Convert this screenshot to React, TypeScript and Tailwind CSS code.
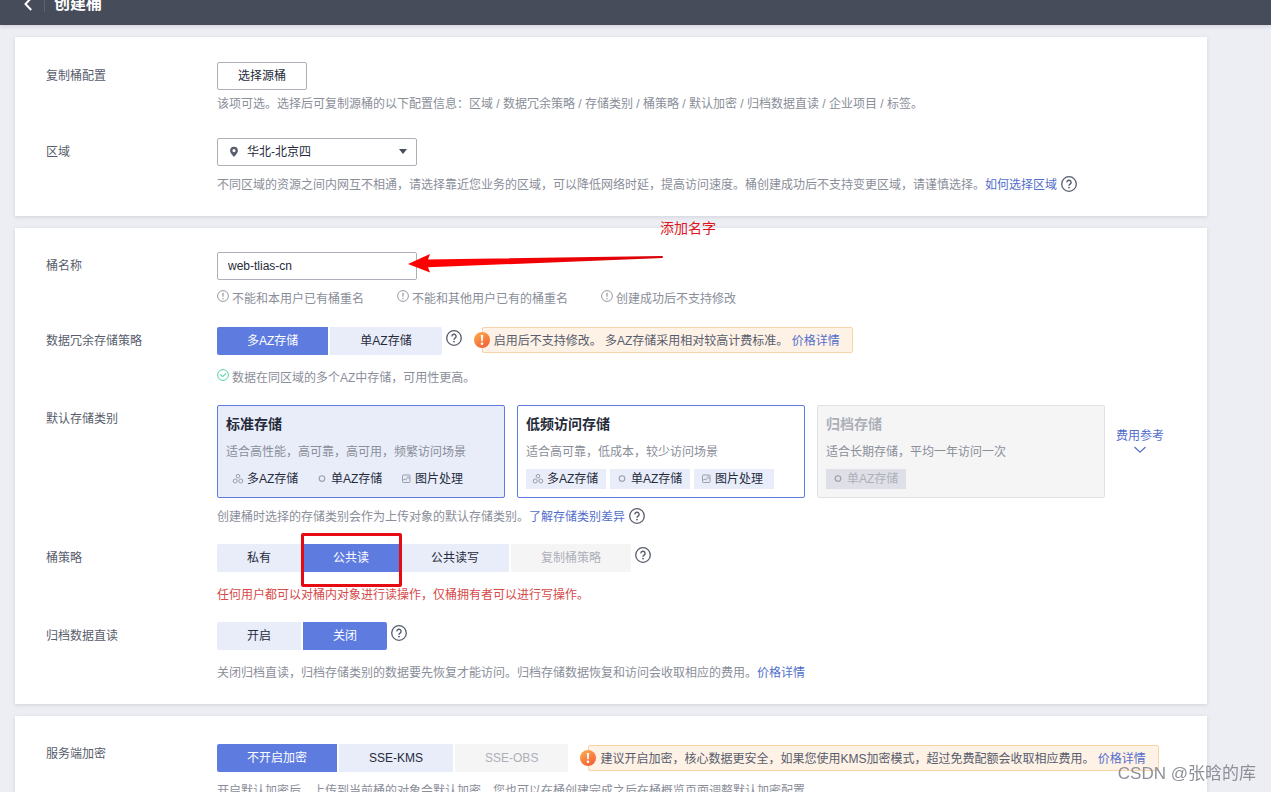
import { useState, type ReactNode } from "react";
import clsx from "clsx";

function HelpIcon({ className }: { className?: string }) {
  return (
    <svg viewBox="0 0 16 16" className={clsx("h-4 w-4 shrink-0", className)} fill="none" stroke="#575d6c">
      <circle cx="8" cy="8" r="7.3" strokeWidth="1.3" />
      <path d="M5.9 6.4a2.1 2.1 0 1 1 3.2 1.7c-.7.5-1.1.8-1.1 1.6" strokeWidth="1.4" />
      <circle cx="8" cy="11.6" r=".9" fill="#575d6c" stroke="none" />
    </svg>
  );
}

function InfoIcon() {
  return (
    <svg viewBox="0 0 12 12" className="mb-1.5 h-3 w-3 shrink-0" fill="none" stroke="#8a8e99">
      <circle cx="6" cy="6" r="5.4" strokeWidth=".9" />
      <path d="M6 2.8v4M6 8v1.2" strokeWidth="1.1" />
    </svg>
  );
}

function OkIcon() {
  return (
    <svg viewBox="0 0 12 12" className="mb-1.5 h-3 w-3 shrink-0" fill="none" stroke="#50d4ab">
      <circle cx="6" cy="6" r="5.4" strokeWidth="1" />
      <path d="M3.2 5.4l2.4 2.2 3.6-3.2" strokeWidth="1.1" />
    </svg>
  );
}

function WarnIcon() {
  return (
    <svg viewBox="0 0 16 16" className="absolute -left-[9px] top-1 h-4 w-4">
      <defs>
        <linearGradient id="warn" x1="0" y1="0" x2="0.6" y2="1">
          <stop offset="0" stopColor="#fdb04c" />
          <stop offset="1" stopColor="#f4643a" />
        </linearGradient>
      </defs>
      <circle cx="8" cy="8" r="8" fill="url(#warn)" />
      <path d="M6.8 3h2.4l-.5 6.3H7.3z" fill="#fff" />
      <circle cx="8" cy="11.7" r="1.3" fill="#fff" />
    </svg>
  );
}

type TagKind = "multi" | "single" | "image";

function TagIcon({ kind }: { kind: TagKind }) {
  return (
    <svg viewBox="0 0 12 12" className="h-3 w-3 shrink-0" fill="none" stroke="#9a9eaa" strokeWidth="1">
      {kind === "multi" && (
        <>
          <circle cx="6" cy="3.2" r="1.8" />
          <circle cx="3.2" cy="8" r="2" />
          <circle cx="8.8" cy="8" r="2" />
        </>
      )}
      {kind === "single" && <circle cx="6" cy="5.5" r="2.8" strokeWidth="1.1" />}
      {kind === "image" && (
        <>
          <rect x="2.5" y="2" width="7.5" height="7.5" rx=".8" />
          <path d="M2.5 7.5L5 6l2 1.2M6.500 5h3.500M7.500 3.500h1" />
        </>
      )}
    </svg>
  );
}

type RowProps = { label: string; htmlFor?: string; compact?: boolean; className?: string; children: ReactNode };

function Row({ label, htmlFor, compact, className, children }: RowProps) {
  const Label = htmlFor ? "label" : "span";
  return (
    <div className={clsx("grid grid-cols-[170px_1fr]", className)}>
      <Label htmlFor={htmlFor} className={clsx("-ml-px self-start text-[#575d6c]", compact ? "leading-5" : "leading-7")}>
        {label}
      </Label>
      <div className="min-w-0">{children}</div>
    </div>
  );
}

function Panel({ className, children }: { className?: string; children: ReactNode }) {
  return <section className={clsx("relative bg-white px-8 shadow-[0_1px_4px_rgba(70,76,91,0.16)]", className)}>{children}</section>;
}

function Link({ children }: { children: ReactNode }) {
  return (
    <a href="#" className="text-[#526ecc]">
      {children}
    </a>
  );
}

function Hint({ className, children }: { className?: string; children: ReactNode }) {
  return <p className={clsx("flex items-center whitespace-nowrap leading-5 text-[#8a8e99]", className)}>{children}</p>;
}

function Notice({ children }: { children: ReactNode }) {
  return (
    <div className="relative ml-5 h-[26px] whitespace-nowrap rounded-xs border border-[#f8d3a8] bg-[#fef1e6] pl-[11px] pr-3 leading-[26px] text-[#575d6c]">
      <WarnIcon />
      {children}
    </div>
  );
}

type Option = { text: string; disabled?: boolean; marked?: boolean };

function Segments({ label, options, initial }: { label: string; options: Option[]; initial: number }) {
  const [active, setActive] = useState(initial);
  return (
    <div role="group" aria-label={label} className="flex gap-0.5">
      {options.map((o, i) => (
        <button
          key={o.text}
          type="button"
          disabled={o.disabled}
          aria-pressed={i === active}
          onClick={() => setActive(i)}
          className={clsx(
            "relative h-7 whitespace-nowrap px-[30px] first:rounded-l-xs last:rounded-r-xs",
            o.disabled ? "bg-[#f5f5f6] text-[#adb0b8]" : i === active ? "bg-[#5e7ce0] text-white" : "bg-[#e9edfa] text-[#252b3a]",
          )}
        >
          {o.text}
          {o.marked && <span className="absolute -bottom-[15px] -left-0.5 -right-[3px] -top-[11px] z-10 rounded-xs border-[3px] border-[#e60a12]" />}
        </button>
      ))}
    </div>
  );
}

const tagText: Record<TagKind, string> = { multi: "多AZ存储", single: "单AZ存储", image: "图片处理" };

const classes: { title: string; desc: string; tags: TagKind[]; disabled?: boolean }[] = [
  { title: "标准存储", desc: "适合高性能，高可靠，高可用，频繁访问场景", tags: ["multi", "single", "image"] },
  { title: "低频访问存储", desc: "适合高可靠，低成本，较少访问场景", tags: ["multi", "single", "image"] },
  { title: "归档存储", desc: "适合长期存储，平均一年访问一次", tags: ["single"], disabled: true },
];

function StorageClasses() {
  const [active, setActive] = useState(0);
  return (
    <div className="flex">
      <div className="flex gap-3">
        {classes.map((c, i) => (
          <button
            key={c.title}
            type="button"
            disabled={c.disabled}
            aria-pressed={i === active}
            onClick={() => setActive(i)}
            className={clsx(
              "w-72 rounded-xs border px-2 py-2 text-left",
              c.disabled ? "border-[#dfe1e6] bg-[#f5f5f6]" : i === active ? "border-[#5e7ce0] bg-[#e9edfa]" : "border-[#5e7ce0] bg-white",
            )}
          >
            <span className={clsx("block text-sm font-bold", c.disabled ? "text-[#adb0b8]" : "text-[#252b3a]")}>{c.title}</span>
            <span className="mt-2 block leading-5 text-[#8a8e99]">{c.desc}</span>
            <span className="mt-[7px] flex gap-1">
              {c.tags.map((t) => (
                <span
                  key={t}
                  className={clsx(
                    "flex h-5 w-20 items-center gap-[3px] whitespace-nowrap pl-1.5",
                    c.disabled ? "bg-[#dfe0e7] text-[#adb0b8]" : "bg-[#e9edfa] text-[#252b3a]",
                  )}
                >
                  <TagIcon kind={t} />
                  {tagText[t]}
                </span>
              ))}
            </span>
          </button>
        ))}
      </div>
      <a href="#" className="ml-[11px] flex flex-col items-center self-start whitespace-nowrap pt-[21px] leading-5 text-[#526ecc]">
        费用参考
        <svg viewBox="0 0 12 8" className="h-2 w-3" fill="none" stroke="#526ecc" strokeWidth="1.2">
          <path d="M.5 1L6 6.2 11.5 1" />
        </svg>
      </a>
    </div>
  );
}

export default function App() {
  const [name, setName] = useState("web-tlias-cn");

  return (
    <div className="h-screen overflow-hidden bg-[#edeef4] font-['Liberation_Sans','Noto_Sans_CJK_SC',sans-serif] text-xs text-[#252b3a]">
      <header className="h-[25px] overflow-hidden bg-[#464c59] shadow-[0_1px_4px_rgba(70,76,91,0.2)]">
        <div className="-mt-4 flex h-10 items-center pl-6 text-white">
          <button type="button" aria-label="返回" className="h-3.5 w-2">
            <svg viewBox="0 0 8 14" className="h-3.5 w-2" fill="none" stroke="currentColor" strokeWidth="2">
              <path d="M7.2 1L1.5 7l5.7 6" />
            </svg>
          </button>
          <span className="ml-3 h-4 w-px bg-[#5c6270]" />
          <h1 className="ml-[9px] text-base font-bold">创建桶</h1>
        </div>
      </header>

      <main className="ml-[15px] mr-16 mt-3 flex flex-col gap-3">
        <Panel className="pb-[21px] pt-[25px]">
          <Row label="复制桶配置">
            <button type="button" className="block h-7 w-[90px] rounded-xs border border-[#adb0b8] bg-white">
              选择源桶
            </button>
            <Hint className="mt-1">
              该项可选。选择后可复制源桶的以下配置信息：区域 / 数据冗余策略 / 存储类别 / 桶策略 / 默认加密 / 归档数据直读 / 企业项目 / 标签。
            </Hint>
          </Row>
          <Row label="区域" htmlFor="region" className="mt-6">
            <div className="relative h-7 w-[200px]">
              <select id="region" className="h-7 w-full appearance-none rounded-xs border border-[#adb0b8] bg-white pl-[29px]">
                <option>华北-北京四</option>
              </select>
              <svg viewBox="0 0 10 12" className="pointer-events-none absolute left-3 top-2 h-3 w-2.5">
                <path d="M5 .8A3.9 3.9 0 0 0 1.1 4.7C1.1 7 5 10.8 5 10.8S8.9 7 8.9 4.7A3.9 3.9 0 0 0 5 .8zm0 5.4a1.6 1.6 0 1 1 0-3.2 1.6 1.6 0 0 1 0 3.2z" fill="#575d6c" />
              </svg>
              <svg viewBox="0 0 8 5" className="pointer-events-none absolute right-2.5 top-[11px] h-[5px] w-2">
                <path d="M0 0h8L4 5z" fill="#464c59" />
              </svg>
            </div>
            <Hint className="mt-[9px]">
              不同区域的资源之间内网互不相通，请选择靠近您业务的区域，可以降低网络时延，提高访问速度。桶创建成功后不支持变更区域，请谨慎选择。
              <Link>如何选择区域</Link>
              <HelpIcon className="mb-0.5 ml-1" />
            </Hint>
          </Row>
        </Panel>

        <Panel className="pb-[21px] pt-6">
          <span className="absolute -top-2.5 left-[645px] text-sm text-[#e0141c]">添加名字</span>
          <svg viewBox="0 0 256 20" className="pointer-events-none absolute left-[393px] top-[25px] z-10 h-5 w-64">
            <defs>
              <linearGradient id="arrow">
                <stop offset=".2" stopColor="#ff0000" />
                <stop offset="1" stopColor="#d80008" />
              </linearGradient>
            </defs>
            <path d="M0 11L22 1l-2 5.6L254.7 3v2L20 14.3l2 5.2z" fill="url(#arrow)" />
          </svg>

          <Row label="桶名称" htmlFor="bucket">
            <input
              id="bucket"
              value={name}
              onChange={(e) => setName(e.target.value)}
              className="block h-7 w-[200px] rounded-xs border border-[#adb0b8] px-2.5 outline-none"
            />
            <div className="mt-[9px] flex gap-[33px]">
              {["不能和本用户已有桶重名", "不能和其他用户已有的桶重名", "创建成功后不支持修改"].map((t) => (
                <Hint key={t} className="gap-[3px]">
                  <InfoIcon />
                  {t}
                </Hint>
              ))}
            </div>
          </Row>

          <Row label="数据冗余存储策略" className="mt-[18px]">
            <div className="flex h-7 items-start">
              <Segments label="数据冗余存储策略" initial={0} options={[{ text: "多AZ存储" }, { text: "单AZ存储" }]} />
              <HelpIcon className="ml-1 mt-[3px]" />
              <Notice>
                启用后不支持修改。 多AZ存储采用相对较高计费标准。 <Link>价格详情</Link>
              </Notice>
            </div>
            <Hint className="mt-[13px] gap-[3px]">
              <OkIcon />
              数据在同区域的多个AZ中存储，可用性更高。
            </Hint>
          </Row>

          <Row label="默认存储类别" className="mt-[17px]">
            <StorageClasses />
            <Hint className="mt-[9px]">
              创建桶时选择的存储类别会作为上传对象的默认存储类别。
              <Link>了解存储类别差异</Link>
              <HelpIcon className="mb-0.5 ml-1" />
            </Hint>
          </Row>

          <Row label="桶策略" className="mt-[17px]">
            <div className="flex items-start">
              <Segments
                label="桶策略"
                initial={1}
                options={[{ text: "私有" }, { text: "公共读", marked: true }, { text: "公共读写" }, { text: "复制桶策略", disabled: true }]}
              />
              <HelpIcon className="ml-1 mt-[3px]" />
            </div>
            <p className="mt-[13px] leading-5 text-[#d64a4a]">任何用户都可以对桶内对象进行读操作，仅桶拥有者可以进行写操作。</p>
          </Row>

          <Row label="归档数据直读" className="mt-[17px]">
            <div className="flex items-start">
              <Segments label="归档数据直读" initial={1} options={[{ text: "开启" }, { text: "关闭" }]} />
              <HelpIcon className="ml-1 mt-[3px]" />
            </div>
            <Hint className="mt-[13px]">
              关闭归档直读，归档存储类别的数据要先恢复才能访问。归档存储数据恢复和访问会收取相应的费用。
              <Link>价格详情</Link>
            </Hint>
          </Row>
        </Panel>

        <Panel className="pb-6 pt-7">
          <Row label="服务端加密" compact>
            <div className="flex items-center">
              <Segments label="服务端加密" initial={0} options={[{ text: "不开启加密" }, { text: "SSE-KMS" }, { text: "SSE-OBS", disabled: true }]} />
              <Notice>
                建议开启加密，核心数据更安全，如果您使用KMS加密模式，超过免费配额会收取相应费用。 <Link>价格详情</Link>
              </Notice>
            </div>
            <Hint className="mt-[9px]">开启默认加密后，上传到当前桶的对象会默认加密，您也可以在桶创建完成之后在桶概览页面调整默认加密配置。</Hint>
          </Row>
        </Panel>
      </main>

      <span className="fixed bottom-1.5 right-[15px] text-[17px] leading-6 text-[#8d9098]">CSDN @张晗的库</span>
    </div>
  );
}
